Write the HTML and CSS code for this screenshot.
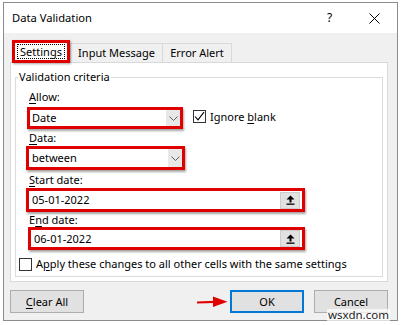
FILE: index.html
```html
<!DOCTYPE html>
<html>
<head>
<meta charset="utf-8">
<link rel="stylesheet" href="styles.css">
</head>
<body>
<div class="window">
  <div class="titlebar">
    <span class="title">Data Validation</span>
    <span class="help">?</span>
    <svg class="close" width="11" height="11" viewBox="0 0 11 11"><path d="M0.5 0.5L10.5 10.5M10.5 0.5L0.5 10.5" stroke="#000" stroke-width="1" fill="none"/></svg>
  </div>
  <div class="content">
    <div class="tabs">
      <div class="tab selected"><span class="focus">Settings</span></div>
      <div class="tab t-input">Input Message</div>
      <div class="tab t-error">Error Alert</div>
    </div>
    <div class="panel">
      <fieldset class="group">
        <legend>Validation criteria</legend>
        <div class="crit">
          <div class="lbl"><u>A</u>llow:</div>
          <div class="row r-allow">
            <div class="hl hl-allow">
              <div class="combo"><span class="val">Date</span><span class="arrow"><svg width="9" height="5" viewBox="0 0 9 5"><path d="M0.5 0.5L4.5 4.5L8.5 0.5" stroke="#606060" fill="none"/></svg></span></div>
            </div>
            <div class="check c-ignore">
              <span class="box"><svg width="11" height="11" viewBox="0 0 11 11"><path d="M1 5.5L4 8.8L10 1.2" stroke="#000" stroke-width="1.1" fill="none"/></svg></span>
              <span>Ignore <u>b</u>lank</span>
            </div>
          </div>
          <div class="lbl l-data"><u>D</u>ata:</div>
          <div class="hl hl-data">
            <div class="combo"><span class="val">between</span><span class="arrow"><svg width="9" height="5" viewBox="0 0 9 5"><path d="M0.5 0.5L4.5 4.5L8.5 0.5" stroke="#606060" fill="none"/></svg></span></div>
          </div>
          <div class="lbl l-start"><u>S</u>tart date:</div>
          <div class="hl hl-start">
            <div class="field"><span class="val">05-01-2022</span><span class="pick"><svg width="9" height="10" viewBox="0 0 9 10"><path d="M4.5 0.5L8.5 4.5H0.5Z" fill="#000"/><rect x="3.5" y="4" width="2" height="3.5" fill="#000"/><rect x="0.5" y="8.5" width="8" height="1.3" fill="#000"/></svg></span></div>
          </div>
          <div class="lbl l-end">E<u>n</u>d date:</div>
          <div class="hl hl-end">
            <div class="field"><span class="val">06-01-2022</span><span class="pick"><svg width="9" height="10" viewBox="0 0 9 10"><path d="M4.5 0.5L8.5 4.5H0.5Z" fill="#000"/><rect x="3.5" y="4" width="2" height="3.5" fill="#000"/><rect x="0.5" y="8.5" width="8" height="1.3" fill="#000"/></svg></span></div>
          </div>
          <div class="check c-apply">
            <span class="box"></span>
            <span>A<u>p</u>ply these changes to all other cells with the same settings</span>
          </div>
        </div>
      </fieldset>
    </div>
    <div class="buttons">
      <div class="btn"><span><u>C</u>lear All</span></div>
      <svg class="redarrow" width="31" height="12" viewBox="0 0 31 12"><path d="M0 6.5L18 5.8" stroke="#e00000" stroke-width="2.2" fill="none"/><path d="M16 0.5L30.5 5.8L16 11Z" fill="#e00000"/></svg>
      <div class="btn btn-ok">OK</div>
      <div class="btn btn-cancel">Cancel</div>
    </div>
  </div>
  <div class="watermark">wsxdn.com</div>
</div>
</body>
</html>
```
FILE: styles.css
```css
* { box-sizing: border-box; }
html, body { margin: 0; padding: 0; background: #fff; }
body {
  font-family: "Noto Sans", "Open Sans", sans-serif;
  font-size: 11px;
  line-height: 14px;
  color: #000;
}
u {
  text-decoration: underline;
  text-decoration-thickness: 1px;
  text-underline-offset: 2px;
}

.window {
  position: relative;
  margin: 2px 0 0 3px;
  width: 395px;
  height: 319px;
  border: 1px solid #8c8c8c;
  background: #f0f0f0;
}

.titlebar {
  height: 30px;
  background: #fff;
  display: flex;
  align-items: center;
  padding-left: 8px;
}
.title { flex: 1; font-size: 11.2px; }
.help { font-size: 12px; width: 8px; margin-right: 34px; }
.close { margin-right: 17px; display: block; }

.content { padding: 7px 9px 0 6px; }

.tabs {
  display: flex;
  align-items: flex-end;
  height: 22px;
  padding-left: 2px;
}
.tab {
  height: 19px;
  border: 1px solid #d9d9d9;
  border-bottom: none;
  background: #f0f0f0;
  display: flex;
  align-items: center;
  justify-content: center;
}
.tab.selected {
  position: relative;
  z-index: 1;
  width: 58px;
  height: 23px;
  margin-bottom: -1px;
  border: 3px solid #e00000;
  background: #fff;
  box-shadow: 1px 1px 2px rgba(0,0,0,0.35);
}
.focus {
  border: 1px dotted #000;
  padding: 0 2px;
  line-height: 13px;
}
.t-input { width: 93px; }
.t-error { width: 70px; margin-left: -1px; }

.panel {
  height: 220px;
  border: 1px solid #d9d9d9;
  background: #fff;
  padding: 0 4px;
}

.group {
  margin: 7px 0 0 0;
  padding: 0;
  width: 368px;
  height: 207px;
  border: 1px solid #dcdcdc;
}
.group legend {
  margin-left: 2px;
  padding: 0 1px;
  line-height: 14px;
}
.crit { padding: 6px 0 0 10px; }

.lbl { padding-left: 3px; height: 14px; }
.l-data { margin-top: 2px; }
.l-start { margin-top: 3px; }
.l-end { margin-top: 1px; }

.row { display: flex; align-items: center; }
.r-allow { margin-top: 3px; }

.hl {
  display: flex;
  border: 3px solid #e00000;
  box-shadow: 1px 2px 2px rgba(0,0,0,0.35);
  background: #fff;
}
.hl-allow { margin-left: 1px; width: 156px; height: 22px; }
.hl-data { margin-top: 1px; width: 159px; height: 24px; }
.hl-start { margin-top: 1px; width: 279px; height: 24px; }
.hl-end { margin-left: 2px; width: 277px; height: 23px; }

.combo, .field {
  flex: 1;
  display: flex;
  align-items: center;
  padding-left: 3px;
}
.hl-allow .combo { padding-left: 2px; }
.val { flex: 1; }
.arrow {
  align-self: stretch;
  width: 14px;
  background: #e8e8e8;
  display: flex;
  align-items: center;
  justify-content: center;
}
.arrow svg { display: block; }
.pick {
  width: 20px;
  height: 17px;
  margin-right: 2px;
  background: #e1e1e1;
  border: 1px solid #cdcdcd;
  display: flex;
  align-items: center;
  justify-content: center;
}
.pick svg { display: block; }

.check { display: flex; align-items: center; }
.box {
  width: 13px;
  height: 13px;
  border: 1px solid #333;
  background: #fff;
  display: flex;
  align-items: center;
  justify-content: center;
  margin-right: 4px;
}
.box svg { display: block; }
.c-ignore { margin-left: 10px; margin-top: -3px; }
.c-apply { margin: 7px 0 0 -7px; }

.buttons {
  display: flex;
  align-items: center;
  margin-top: 8px;
  height: 23px;
}
.btn {
  width: 74px;
  height: 23px;
  background: #e1e1e1;
  border: 1px solid #adadad;
  display: flex;
  align-items: center;
  justify-content: center;
}
.redarrow { margin-left: auto; margin-right: 2px; display: block; }
.btn-ok { border: 2px solid #0078d7; }
.btn-cancel { margin-left: 10px; }

.watermark {
  position: absolute;
  left: 323px;
  top: 306px;
  padding: 0 1px;
  font-family: "Noto Sans", sans-serif;
  font-size: 11.5px;
  line-height: 12px;
  color: #222;
  background: rgba(255,255,255,0.7);
}
```
